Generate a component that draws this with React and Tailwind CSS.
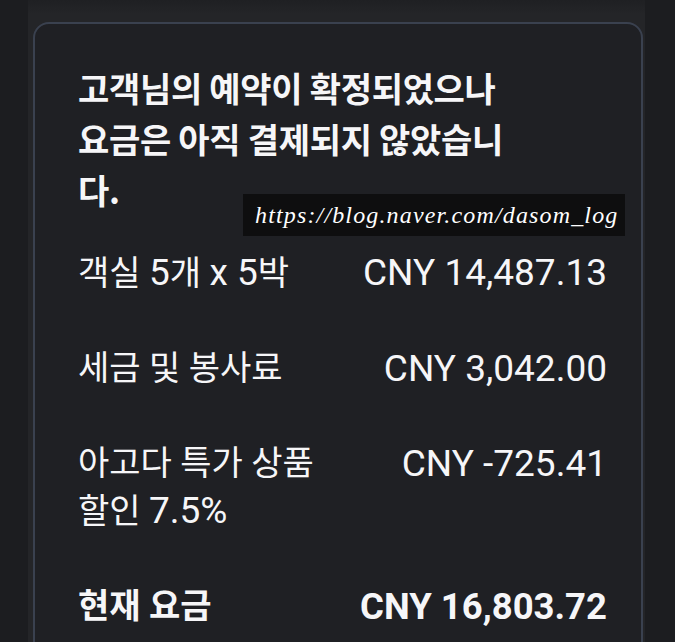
function L({ children }) {
  return <span className="text-[37px]">{children}</span>;
}

export default function App() {
  const rows = [
    { label: <>객실 <L>5</L>개 <L>x 5</L>박</>, value: "CNY 14,487.13" },
    { label: "세금 및 봉사료", value: "CNY 3,042.00" },
    { label: <>아고다 특가 상품 할인 <L>7.5%</L></>, value: "CNY -725.41" },
  ];

  return (
    <div className="min-h-screen w-full bg-[#1c1d20] font-['Roboto','Noto_Sans_CJK_KR',sans-serif] text-[#f6f6f8] overflow-hidden">
      <div className="relative ml-[28px] w-[617px] min-h-[642px] bg-[linear-gradient(180deg,#1f2023_0px,#242528_14px)] pt-[22px] pl-[5px]">
        {/* card */}
        <div className="w-[610px] h-[680px] rounded-[16px] border-2 border-[#3a414f] bg-[#1f2024] pl-[43px] pr-[34px] pt-[38px]">
          <h1 className="font-['Noto_Sans_CJK_KR',sans-serif] font-bold text-[34px] leading-[51px] tracking-[-0.3px]">
            고객님의 예약이 확정되었으나
            <br />
            요금은 아직 결제되지 않았습니
            <br />
            다.
          </h1>

          <div className="mt-[34px] flex flex-col gap-[48px]">
            {rows.map((r) => (
              <div key={r.value} className="flex justify-between items-start text-[34px] leading-[47px]">
                <span className="w-[280px] break-keep">{r.label}</span>
                <span className="shrink-0 text-[37px]">{r.value}</span>
              </div>
            ))}
            <div className="flex justify-between items-start text-[34px] leading-[47px] font-bold">
              <span className="w-[280px] break-keep">현재 요금</span>
              <span className="shrink-0 text-[36.5px]">CNY 16,803.72</span>
            </div>
          </div>
        </div>

        {/* blog watermark overlay */}
        <div className="absolute left-[215px] top-[194px] w-[382px] h-[42px] bg-[#0e0e0f] flex items-center pl-[12px]">
          <span className="font-['Liberation_Serif',serif] italic text-[24px] tracking-[1.15px] text-white">
            https://blog.naver.com/dasom_log
          </span>
        </div>
      </div>
    </div>
  );
}
